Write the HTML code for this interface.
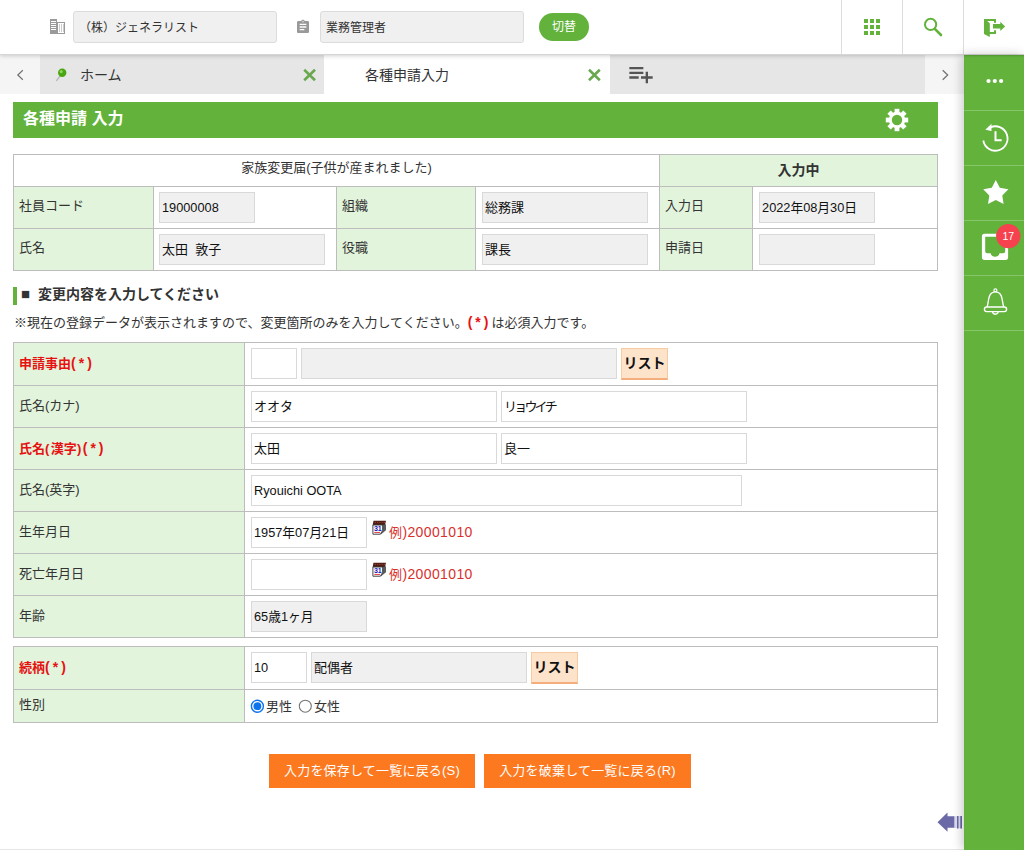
<!DOCTYPE html>
<html lang="ja">
<head>
<meta charset="utf-8">
<title>各種申請入力</title>
<style>
*{box-sizing:border-box;}
html,body{margin:0;padding:0;}
body{width:1024px;height:850px;overflow:hidden;background:#fff;position:relative;
 font-family:"Liberation Sans","Noto Sans CJK JP",sans-serif;font-size:13px;color:#333;}
.abs{position:absolute;}
/* header */
#hdr{position:absolute;left:0;top:0;width:1024px;height:55px;background:#fff;border-bottom:1px solid #d6d6d6;z-index:5;box-shadow:0 1px 4px rgba(0,0,0,.18);}
.hin{position:absolute;top:11px;height:32px;width:204px;background:#f0f0f0;border:1px solid #dcdcdc;border-radius:3px;font-size:12px;line-height:32px;padding-left:6px;color:#333;white-space:nowrap;}
#sw{position:absolute;left:539px;top:13px;width:50px;height:28px;border-radius:14px;background:#62b23c;color:#fff;font-size:12px;line-height:28px;text-align:center;}
.vsep{position:absolute;top:0;width:1px;height:54px;background:#dcdcdc;}
/* tabs */
#tabs{position:absolute;left:0;top:55px;width:964px;height:39px;background:#f5f5f5;}
.tab{position:absolute;top:0;height:39px;font-size:14px;line-height:41px;color:#333;white-space:nowrap;}
/* sidebar */
#side{position:absolute;left:964px;top:55px;width:60px;height:795px;background:#62b23c;z-index:6;box-shadow:-2px 0 10px rgba(0,0,0,.22), inset 0 2px 2px -1px rgba(0,0,0,.18);}
.ssep{position:absolute;left:0;width:60px;height:1px;background:#86c568;}
/* content */
#ttl{position:absolute;left:13px;top:102px;width:925px;height:36px;background:#62b23c;color:#fff;font-weight:bold;font-size:16px;line-height:33px;padding-left:10px;}
table{border-collapse:collapse;position:absolute;table-layout:fixed;}
td{border:1px solid #bdbdbd;padding:0;vertical-align:top;font-size:13px;color:#333;}
td.l{background:#e2f4dc;padding:9px 0 0 5px;}
#t1 td.l{padding-top:8px;}
td.l.r{color:#e61212;font-weight:bold;padding-top:10px;}
.in{position:absolute;height:31px;border:1px solid #d9d9d9;background:#fff;font-size:13px;line-height:29px;padding:0 0 0 2px;color:#111;white-space:nowrap;}
.in.g{background:#f0f0f0;}
.lst{position:absolute;height:32px;width:47px;background:#fee3cb;border:1px solid #f9caa0;border-bottom:2px solid #f4ae7e;font-weight:bold;font-size:14px;line-height:29px;text-align:center;color:#111;}
.btn{position:absolute;top:754px;height:34px;background:#fc7920;color:#fff;font-size:13px;line-height:33px;text-align:center;letter-spacing:.2px;}
td.v{position:relative;}
.ex{position:absolute;color:#d9302c;font-size:14px;line-height:20px;white-space:nowrap;letter-spacing:.38px;}
.ex i{font-style:normal;font-size:13px;}
.radio{position:absolute;width:13px;height:13px;border-radius:50%;border:1px solid #767676;background:#fff;}
.radio.on{border-color:#0b6fe0;}
.radio.on::after{content:"";position:absolute;left:2px;top:2px;width:7px;height:7px;border-radius:50%;background:#0b6fe0;}
.rl{position:absolute;font-size:13px;line-height:20px;color:#333;white-space:nowrap;}
.rq{color:#e61212;font-weight:bold;letter-spacing:3px;font-size:14px;}
.pb{letter-spacing:1.5px;}
.in.n{font-size:12.75px;padding-top:0;}
</style>
</head>
<body>
<div id="hdr">
  
  <svg class="abs" style="left:50px;top:19px" width="15" height="15" viewBox="0 0 15 15">
    <rect x="0" y="0" width="7" height="15" fill="#9a9a9a"/>
    <rect x="1" y="2" width="5" height="1" fill="#fff"/><rect x="1" y="4" width="5" height="1" fill="#fff"/><rect x="1" y="6" width="5" height="1" fill="#fff"/><rect x="1" y="8" width="5" height="1" fill="#fff"/><rect x="1" y="10" width="5" height="1" fill="#fff"/>
    <rect x="7.5" y="3.5" width="7" height="11" fill="#fff" stroke="#9a9a9a" stroke-width="1"/>
    <g fill="#9a9a9a"><rect x="9" y="5.5" width="1" height="1"/><rect x="11" y="5.5" width="1" height="1"/><rect x="13" y="5.5" width="1" height="1"/><rect x="9" y="7.5" width="1" height="1"/><rect x="11" y="7.5" width="1" height="1"/><rect x="13" y="7.5" width="1" height="1"/><rect x="9" y="9.5" width="1" height="1"/><rect x="11" y="9.5" width="1" height="1"/><rect x="13" y="9.5" width="1" height="1"/><rect x="9" y="11.5" width="1" height="1"/><rect x="11" y="11.5" width="1" height="1"/><rect x="13" y="11.5" width="1" height="1"/></g>
  </svg>
  <svg class="abs" style="left:295px;top:19px" width="16" height="16" viewBox="0 0 24 24"><path fill="#999" d="M19 3h-4.180C14.400 1.840 13.300 1 12 1c-1.300 0-2.400.840-2.820 2H5c-1.100 0-2 .900-2 2v14c0 1.100.900 2 2 2h14c1.100 0 2-.900 2-2V5c0-1.100-.900-2-2-2zm-7 0c.550 0 1 .450 1 1s-.450 1-1 1-1-.450-1-1 .450-1 1-1zm2 14H7v-2h7v2zm3-4H7v-2h10v2zm0-4H7V7h10v2z"/></svg>
  <svg class="abs" style="left:860px;top:15px" width="24" height="24" viewBox="0 0 24 24"><path fill="#62b23c" d="M4 8h4V4H4v4zm6 12h4v-4h-4v4zm-6 0h4v-4H4v4zm0-6h4v-4H4v4zm6 0h4v-4h-4v4zm6-10v4h4V4h-4zm-6 4h4V4h-4v4zm6 6h4v-4h-4v4zm0 6h4v-4h-4v4z"/></svg>
  <svg class="abs" style="left:921px;top:15px" width="24" height="24" viewBox="0 0 24 24"><circle cx="9.600" cy="9.400" r="5.600" fill="none" stroke="#62b23c" stroke-width="2"/><path d="M13.800 13.800L20 20" stroke="#62b23c" stroke-width="2.600" stroke-linecap="round"/></svg>
  <svg class="abs" style="left:980px;top:15px" width="30" height="26" viewBox="980 15 30 26">
    <path fill="#62b23c" d="M984 19h12v3.700h-2V21h-6.800l2.600 2.200V32h4.200v-1.800h2V34h-6.200v3l-5.800-3z"/>
    <path fill="#62b23c" d="M993 24.100h7.300v-2.300l4.800 4.600-4.800 4.500v-2.300H993z"/>
  </svg>
  <div class="hin" style="left:73px;padding-left:5px;">（株）ジェネラリスト</div>
  <div class="hin" style="left:320px;padding-left:5px;">業務管理者</div>
  <div id="sw">切替</div>
  <div class="vsep" style="left:841px"></div>
  <div class="vsep" style="left:902px"></div>
  <div class="vsep" style="left:963px"></div>
</div>

<div id="tabs">
  <div class="tab" style="left:40px;width:284px;background:#e6e6e6;padding-left:40px;">ホーム</div>
  <div class="tab" style="left:324px;width:286px;background:#fff;padding-left:41px;">各種申請入力</div>
  <div class="tab" style="left:610px;width:315px;background:#e6e6e6;"></div>
  <svg class="abs" style="left:0;top:0" width="964" height="39" viewBox="0 55 964 39">
    <path d="M22.800 70.200l-5 4.800 5 4.800" fill="none" stroke="#707070" stroke-width="1.200"/>
    <path d="M942.700 70.200l5 4.800-5 4.800" fill="none" stroke="#707070" stroke-width="1.200"/>
    <path d="M60.500 75.500L56.300 80.800" stroke="#b5b5b5" stroke-width="1.300"/>
    <circle cx="62.200" cy="72.800" r="4.200" fill="#4aa512"/>
    <circle cx="61.200" cy="71.600" r="1.600" fill="#8fd45a"/>
    <path d="M304.200 69.800l10.800 10.400M315 69.800l-10.800 10.400" stroke="#6aa84f" stroke-width="2.600"/>
    <path d="M589 69.800l10.800 10.400M599.800 69.800L589 80.200" stroke="#6aa84f" stroke-width="2.600"/>
  </svg>
  <svg class="abs" style="left:626.500px;top:5px" width="28" height="28" viewBox="0 0 24 24"><path fill="#555" d="M14 10H2v2h12v-2zm0-4H2v2h12V6zm4 8v-4h-2v4h-4v2h4v4h2v-4h4v-2h-4zM2 16h8v-2H2v2z"/></svg>

</div>

<div id="side">
  <svg class="abs" style="left:0;top:0" width="60" height="340" viewBox="964 55 60 340">
    <g fill="#fff"><circle cx="988.500" cy="81" r="2.100"/><circle cx="994.800" cy="81" r="2.100"/><circle cx="1001.100" cy="81" r="2.100"/></g>
    <!-- history -->
    <path d="M983.300 140.500A12.200 12.200 0 1 0 990.500 127.300" fill="none" stroke="#fff" stroke-width="1.800"/>
    <path d="M985.300 129.800l6.200-6v7.300z" fill="#fff"/>
    <path d="M995.500 131.300v9h6.200" fill="none" stroke="#fff" stroke-width="2"/>
    <!-- star -->
    <polygon fill="#fff" points="995.8,180.0 999.8,187.8 1008.4,189.2 1002.3,195.4 1003.6,204.1 995.8,200.1 988.0,204.1 989.3,195.4 983.2,189.2 991.8,187.8"/>
    <!-- inbox -->
    <path fill="#fff" fill-rule="evenodd" d="M984.500 233.800h21a2.600 2.600 0 0 1 2.600 2.600v20.900a2.600 2.600 0 0 1-2.600 2.600h-21a2.600 2.600 0 0 1-2.600-2.600v-20.900a2.600 2.600 0 0 1 2.600-2.600zM985.200 236.800v14.400q0 2 2 2h3.500a4.500 4.500 0 0 0 8.800 0h3.700q2 0 2-2v-14.400z"/>
    <circle cx="1008.300" cy="236.100" r="12.200" fill="#f5424e"/>
    <text x="1008.300" y="239.900" font-size="10.500" fill="#fff" text-anchor="middle" font-family="Liberation Sans, sans-serif">17</text>
    <!-- bell -->
    <path d="M987 307C988.600 303 988 298.500 989.800 295.300C991.300 292.700 993.400 291.900 995.400 291.900C997.400 291.900 999.500 292.700 1001 295.300C1002.800 298.500 1002.200 303 1003.800 307" fill="none" stroke="#fff" stroke-width="1.400"/>
    <rect x="984.400" y="307" width="22.200" height="4.600" rx="2.300" fill="none" stroke="#fff" stroke-width="1.400"/>
    <circle cx="995.400" cy="290.300" r="1.500" fill="none" stroke="#fff" stroke-width="1.200"/>
    <path d="M992.500 312a3 3 0 0 0 5.800 0" fill="none" stroke="#fff" stroke-width="1.300"/>
  </svg>

  <div class="ssep" style="top:55px"></div>
  <div class="ssep" style="top:110px"></div>
  <div class="ssep" style="top:165px"></div>
  <div class="ssep" style="top:220px"></div>
  <div class="ssep" style="top:275px"></div>
</div>

<div id="ttl">各種申請 入力<svg class="abs" style="left:871px;top:5px" width="26" height="26" viewBox="-13 -13 26 26"><g fill="#fff"><rect x="-2.400" y="-11.200" width="4.800" height="6" transform="rotate(0)"/><rect x="-2.400" y="-11.200" width="4.800" height="6" transform="rotate(45)"/><rect x="-2.400" y="-11.200" width="4.800" height="6" transform="rotate(90)"/><rect x="-2.400" y="-11.200" width="4.800" height="6" transform="rotate(135)"/><rect x="-2.400" y="-11.200" width="4.800" height="6" transform="rotate(180)"/><rect x="-2.400" y="-11.200" width="4.800" height="6" transform="rotate(225)"/><rect x="-2.400" y="-11.200" width="4.800" height="6" transform="rotate(270)"/><rect x="-2.400" y="-11.200" width="4.800" height="6" transform="rotate(315)"/><circle r="8.200"/></g><circle r="5.200" fill="#62b23c"/></svg></div>

<div id="content">
<table id="t1" style="left:13px;top:154px;width:924px;">
 <colgroup><col style="width:140px"><col style="width:183px"><col style="width:139px"><col style="width:184px"><col style="width:93px"><col style="width:185px"></colgroup>
 <tr style="height:32px">
  <td colspan="4" style="text-align:center;padding-top:2px;">家族変更届(子供が産まれました)</td>
  <td colspan="2" class="l" style="text-align:center;font-weight:bold;font-size:14px;padding:4px 0 0 0;">入力中</td>
 </tr>
 <tr style="height:42px">
  <td class="l">社員コード</td>
  <td class="v"><div class="in g n" style="left:5px;top:5px;width:96px;">19000008</div></td>
  <td class="l">組織</td>
  <td class="v"><div class="in g" style="left:6px;top:5px;width:166px;">総務課</div></td>
  <td class="l">入力日</td>
  <td class="v"><div class="in g n" style="left:6px;top:5px;width:116px;">2022年08月30日</div></td>
 </tr>
 <tr style="height:42px">
  <td class="l">氏名</td>
  <td class="v"><div class="in g" style="left:5px;top:5px;width:166px;">太田&nbsp;&nbsp;敦子</div></td>
  <td class="l">役職</td>
  <td class="v"><div class="in g" style="left:6px;top:5px;width:166px;">課長</div></td>
  <td class="l">申請日</td>
  <td class="v"><div class="in g" style="left:6px;top:5px;width:116px;"></div></td>
 </tr>
</table>

<div class="abs" style="left:13px;top:287px;width:4px;height:18px;background:#62b23c;"></div>
<div class="abs" id="sech" style="left:21px;top:284px;font-size:14px;font-weight:bold;line-height:20px;color:#333;white-space:nowrap;"><span style="display:inline-block;width:13px;font-size:15px;line-height:14px;vertical-align:0px;">■</span> 変更内容を入力してください</div>
<div class="abs" id="note" style="left:14px;top:312px;font-size:13px;line-height:20px;color:#333;white-space:nowrap;">※現在の登録データが表示されますので、変更箇所のみを入力してください。<b class="rq">(*)</b>は必須入力です。</div>

<table id="t2" style="left:13px;top:342px;width:924px;">
 <colgroup><col style="width:231px"><col style="width:693px"></colgroup>
 <tr style="height:43px"><td class="l r">申請事由<span class="rq">(*)</span></td><td class="v">
   <div class="in" style="left:6px;top:5px;width:46px;"></div>
   <div class="in g" style="left:56px;top:5px;width:316px;"></div>
   <div class="lst" style="left:376px;top:5px;">リスト</div></td></tr>
 <tr style="height:42px"><td class="l">氏名(カナ)</td><td class="v">
   <div class="in" style="left:6px;top:5px;width:246px;">オオタ</div>
   <div class="in" style="left:256px;top:5px;width:246px;letter-spacing:-2.8px;">リョウイチ</div></td></tr>
 <tr style="height:42px"><td class="l r">氏名<span class="pb">(</span>漢字<span class="pb">)</span><span class="rq">(*)</span></td><td class="v">
   <div class="in" style="left:6px;top:5px;width:246px;">太田</div>
   <div class="in" style="left:256px;top:5px;width:246px;">良一</div></td></tr>
 <tr style="height:42px"><td class="l">氏名(英字)</td><td class="v">
   <div class="in n" style="left:6px;top:5px;width:491px;">Ryouichi OOTA</div></td></tr>
 <tr style="height:42px"><td class="l">生年月日</td><td class="v">
   <div class="in n" style="left:6px;top:5px;width:116px;">1957年07月21日</div>
   <svg class="abs" style="left:126px;top:6.500px" width="15.200" height="16.200" viewBox="0 0 16 17">
  <polygon points="2.600,1.800 15.800,1.800 14.800,6.300 1.800,6.300" fill="#4d1d14"/>
  <g fill="#a5483a"><rect x="4" y="3" width="1.200" height="1"/><rect x="6.400" y="3" width="1.200" height="1"/><rect x="8.800" y="3" width="1.200" height="1"/><rect x="11.200" y="3" width="1.200" height="1"/><rect x="13.400" y="3" width="1.200" height="1"/></g>
  <polygon points="12.300,6.300 15.800,5.500 15.800,11.800 10,16.500 11,12.500" fill="#5c5c5c"/>
  <polygon points="2,6.300 12.300,6.300 12.300,12 9.800,16 2,16" fill="#fff" stroke="#3c3c3c" stroke-width="1"/>
  <text x="3.200" y="12.800" font-size="7.500" font-weight="bold" fill="#1818b4" font-family="Liberation Sans, sans-serif" letter-spacing="-0.3">31</text>
  <rect x="3.500" y="13.600" width="6" height="1" fill="#d33"/>
</svg><div class="ex" style="left:144px;top:10px;"><i>例</i>)20001010</div></td></tr>
 <tr style="height:42px"><td class="l">死亡年月日</td><td class="v">
   <div class="in" style="left:6px;top:5px;width:116px;"></div>
   <svg class="abs" style="left:126px;top:6.500px" width="15.200" height="16.200" viewBox="0 0 16 17">
  <polygon points="2.600,1.800 15.800,1.800 14.800,6.300 1.800,6.300" fill="#4d1d14"/>
  <g fill="#a5483a"><rect x="4" y="3" width="1.200" height="1"/><rect x="6.400" y="3" width="1.200" height="1"/><rect x="8.800" y="3" width="1.200" height="1"/><rect x="11.200" y="3" width="1.200" height="1"/><rect x="13.400" y="3" width="1.200" height="1"/></g>
  <polygon points="12.300,6.300 15.800,5.500 15.800,11.800 10,16.500 11,12.500" fill="#5c5c5c"/>
  <polygon points="2,6.300 12.300,6.300 12.300,12 9.800,16 2,16" fill="#fff" stroke="#3c3c3c" stroke-width="1"/>
  <text x="3.200" y="12.800" font-size="7.500" font-weight="bold" fill="#1818b4" font-family="Liberation Sans, sans-serif" letter-spacing="-0.3">31</text>
  <rect x="3.500" y="13.600" width="6" height="1" fill="#d33"/>
</svg><div class="ex" style="left:144px;top:10px;"><i>例</i>)20001010</div></td></tr>
 <tr style="height:42px"><td class="l">年齢</td><td class="v">
   <div class="in g n" style="left:6px;top:5px;width:116px;">65歳1ヶ月</div></td></tr>
</table>

<table id="t3" style="left:13px;top:646px;width:924px;">
 <colgroup><col style="width:231px"><col style="width:693px"></colgroup>
 <tr style="height:43px"><td class="l r">続柄<span class="rq">(*)</span></td><td class="v">
   <div class="in n" style="left:6px;top:5px;width:56px;">10</div>
   <div class="in g" style="left:66px;top:5px;width:216px;font-size:13px;">配偶者</div>
   <div class="lst" style="left:286px;top:5px;">リスト</div></td></tr>
 <tr style="height:33px"><td class="l" style="padding-top:4px">性別</td><td class="v">
   <svg class="abs" style="left:5px;top:9px" width="15" height="15" viewBox="0 0 15 15"><circle cx="7.400" cy="7.200" r="6" fill="#fff" stroke="#0f74ec" stroke-width="1.400"/><circle cx="7.400" cy="7.200" r="3.900" fill="#0f74ec"/></svg><div class="rl" style="left:21px;top:7px;">男性</div>
   <svg class="abs" style="left:53px;top:9px" width="15" height="15" viewBox="0 0 15 15"><circle cx="7.300" cy="7.200" r="6" fill="#fff" stroke="#767676" stroke-width="1.100"/></svg><div class="rl" style="left:69px;top:7px;">女性</div></td></tr>
</table>
</div>

<div class="btn" style="left:269px;width:206px;">入力を保存して一覧に戻る(S)</div>
<div class="btn" style="left:484px;width:207px;">入力を破棄して一覧に戻る(R)</div>

<svg class="abs" style="left:936px;top:811px" width="27" height="22" viewBox="936 811 27 22">
  <path fill="#6b6aa6" d="M937.500 822.300l10-9.700v3.600h7.100v11.500h-7.100v4.100z"/>
  <rect x="954.600" y="816.200" width="7.400" height="12" fill="#dcdcf4"/>
  <rect x="957" y="816" width="1.500" height="12.500" fill="#6b6aa6"/>
  <rect x="960.300" y="816" width="1.700" height="12.500" fill="#6b6aa6"/>
</svg>
<div class="abs" style="left:0;top:849px;width:964px;height:1px;background:#e6e6e6;"></div>
</body>
</html>
